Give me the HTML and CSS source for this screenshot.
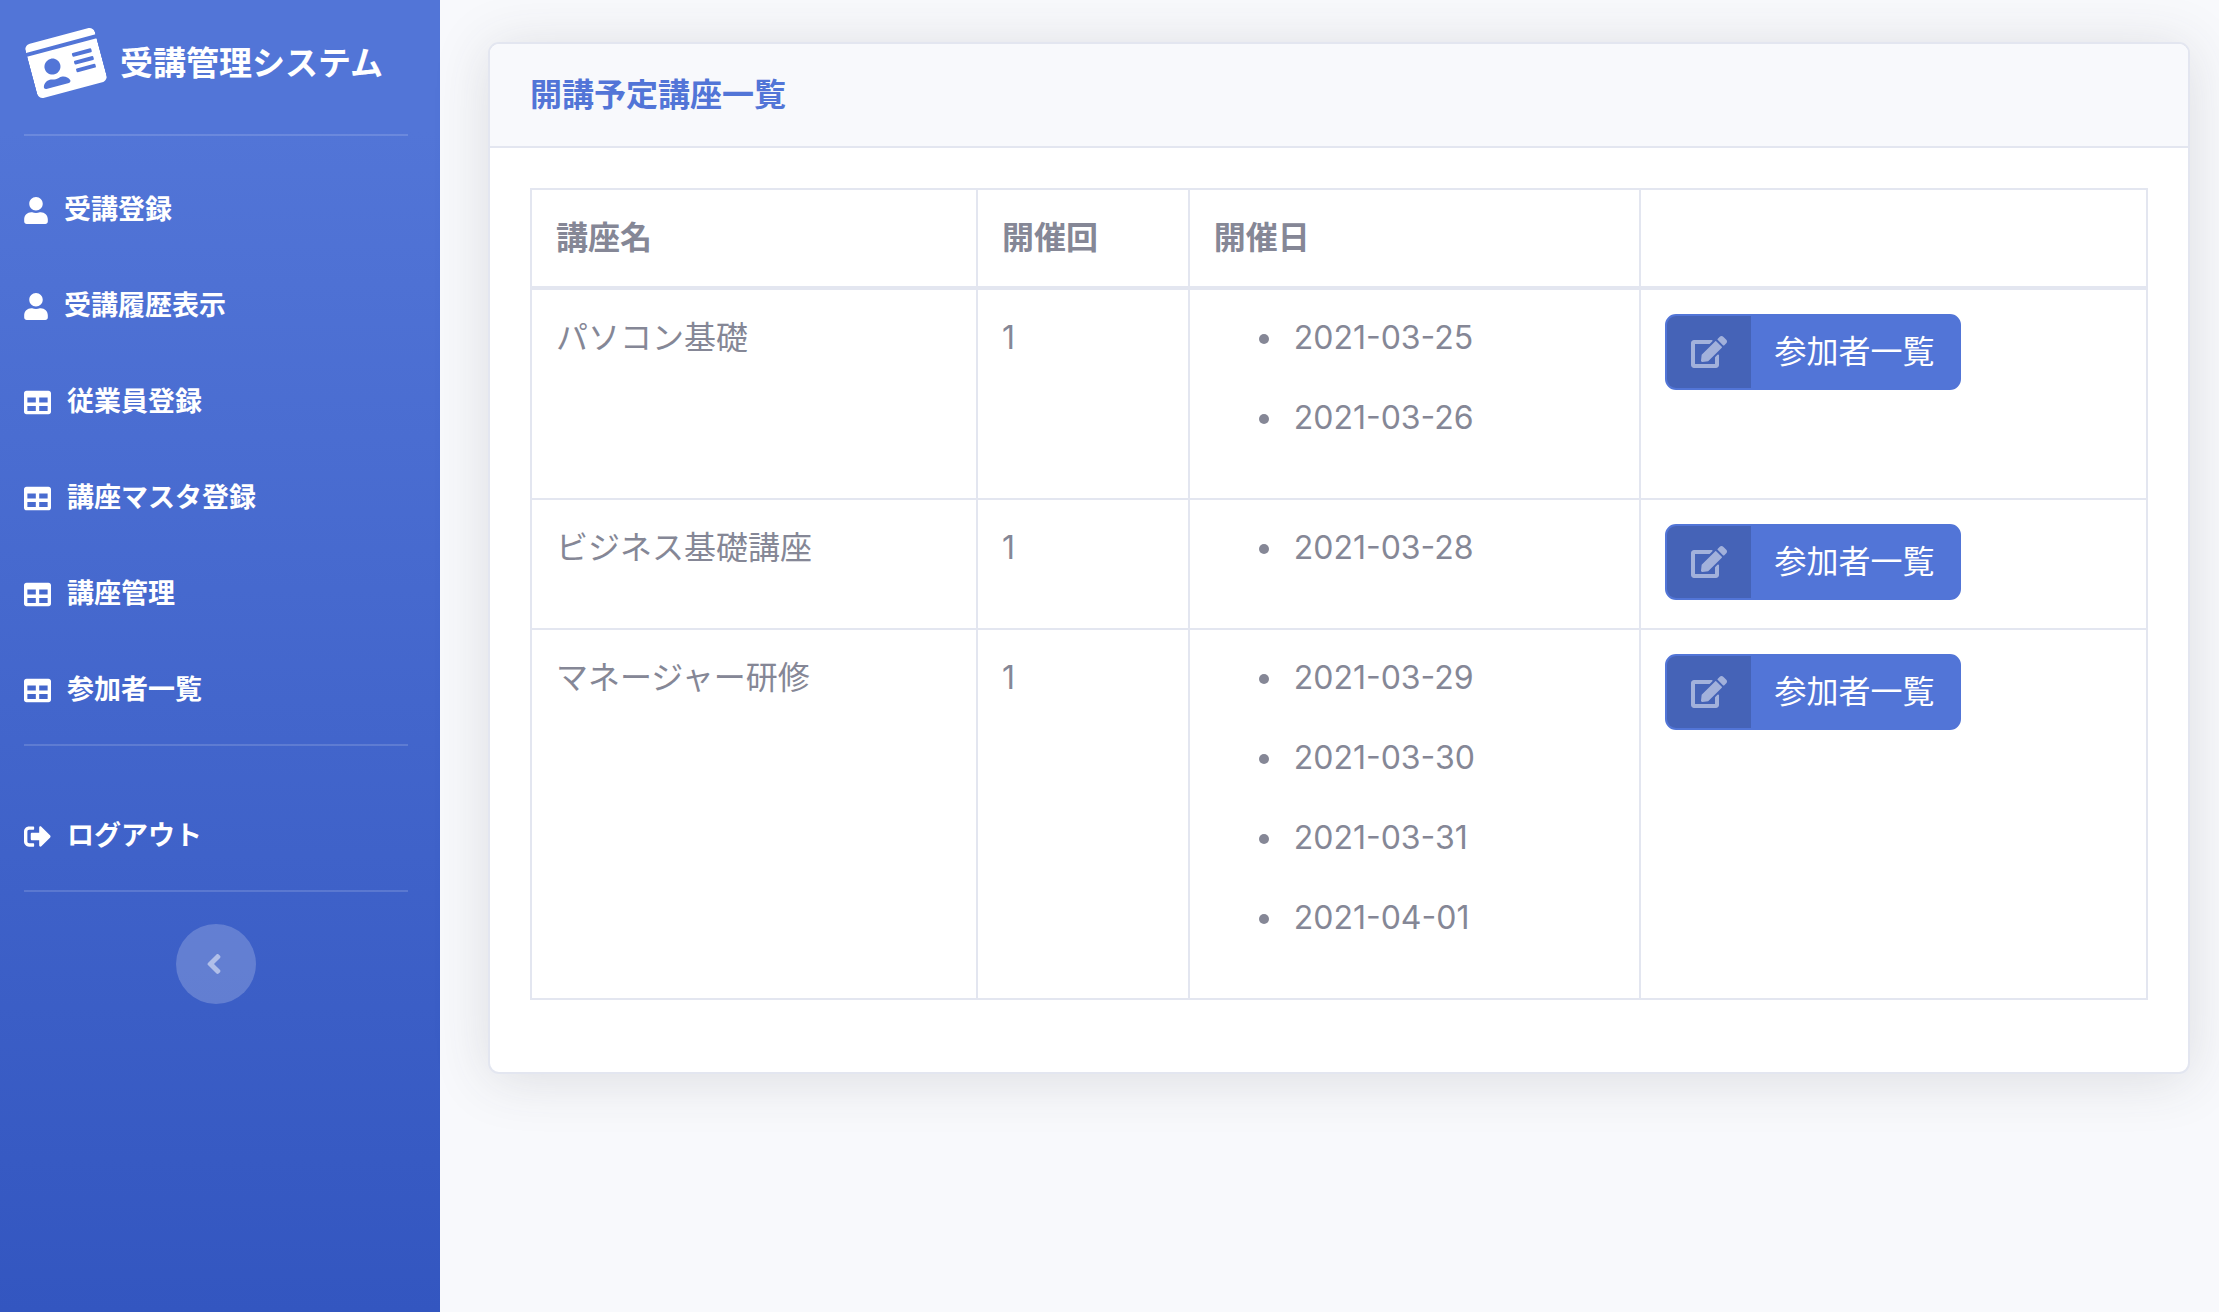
FILE: index.html
```html
<!DOCTYPE html>
<html lang="ja">
  <head>
    <meta charset="UTF-8" />
    <meta name="viewport" content="width=device-width, initial-scale=1.0" />
    <title>受講管理システム</title>
    <link rel="stylesheet" href="styles.css" />
  </head>
  <body>
    <!-- アイコン -->
    <svg class="icon-defs" aria-hidden="true">
      <symbol id="icon-id-card" viewBox="0 0 576 512">
        <path d="M528 32H48C21.5 32 0 53.5 0 80v16h576V80c0-26.5-21.5-48-48-48zM0 432c0 26.5 21.5 48 48 48h480c26.5 0 48-21.5 48-48V128H0v304zm352-232c0-4.4 3.6-8 8-8h144c4.4 0 8 3.6 8 8v16c0 4.4-3.6 8-8 8H360c-4.4 0-8-3.6-8-8v-16zm0 64c0-4.4 3.6-8 8-8h144c4.4 0 8 3.6 8 8v16c0 4.4-3.6 8-8 8H360c-4.4 0-8-3.6-8-8v-16zm0 64c0-4.4 3.6-8 8-8h144c4.4 0 8 3.6 8 8v16c0 4.4-3.6 8-8 8H360c-4.4 0-8-3.6-8-8v-16zM176 192c35.3 0 64 28.7 64 64s-28.7 64-64 64-64-28.7-64-64 28.7-64 64-64zM67.1 396.2C75.5 370.5 99.6 352 128 352h8.2c12.3 5.1 25.7 8 39.8 8s27.6-2.9 39.8-8h8.2c28.4 0 52.5 18.5 60.9 44.2 3.2 9.9-5.2 19.8-15.6 19.8H82.7c-10.4 0-18.8-10-15.6-19.8z" />
      </symbol>
      <symbol id="icon-user" viewBox="0 0 448 512">
        <path d="M224 256c70.7 0 128-57.3 128-128S294.7 0 224 0 96 57.3 96 128s57.3 128 128 128zm89.6 32h-16.7c-22.2 10.2-46.9 16-72.9 16s-50.6-5.8-72.9-16h-16.7C60.2 288 0 348.2 0 422.4V464c0 26.5 21.5 48 48 48h352c26.5 0 48-21.5 48-48v-41.6c0-74.2-60.2-134.4-134.4-134.4z" />
      </symbol>
      <symbol id="icon-table" viewBox="0 0 512 512">
        <path d="M464 32H48C21.49 32 0 53.49 0 80v352c0 26.51 21.49 48 48 48h416c26.51 0 48-21.49 48-48V80c0-26.51-21.49-48-48-48zM224 416H64v-96h160v96zm0-160H64v-96h160v96zm224 160H288v-96h160v96zm0-160H288v-96h160v96z" />
      </symbol>
      <symbol id="icon-sign-out" viewBox="0 0 512 512">
        <path d="M497 273L329 441c-15 15-41 4.5-41-17v-96H152c-13.3 0-24-10.7-24-24v-96c0-13.3 10.7-24 24-24h136V88c0-21.4 25.9-32 41-17l168 168c9.3 9.4 9.3 24.6 0 34zM192 436v-40c0-6.6-5.4-12-12-12H96c-17.7 0-32-14.3-32-32V160c0-17.7 14.3-32 32-32h84c6.6 0 12-5.4 12-12V76c0-6.6-5.4-12-12-12H96c-53 0-96 43-96 96v192c0 53 43 96 96 96h84c6.6 0 12-5.4 12-12z" />
      </symbol>
      <symbol id="icon-angle-left" viewBox="0 0 256 512">
        <path d="M31.7 239l136-136c9.4-9.4 24.6-9.4 33.9 0l22.6 22.6c9.4 9.4 9.4 24.6 0 33.9L127.9 256l96.4 96.4c9.4 9.4 9.4 24.6 0 33.9L201.7 409c-9.4 9.4-24.6 9.4-33.9 0l-136-136c-9.5-9.4-9.5-24.6-.1-34z" />
      </symbol>
      <symbol id="icon-edit" viewBox="0 0 576 512">
        <path d="M402.6 83.2l90.2 90.2c3.8 3.8 3.8 10 0 13.8L274.4 405.6l-92.8 10.3c-12.4 1.4-22.9-9.1-21.5-21.5l10.3-92.8L388.8 83.2c3.8-3.8 10-3.8 13.8 0zm162-22.9l-48.8-48.8c-15.2-15.2-39.9-15.2-55.2 0l-35.4 35.4c-3.8 3.8-3.8 10 0 13.8l90.2 90.2c3.8 3.8 10 3.8 13.8 0l35.4-35.4c15.2-15.3 15.2-40 0-55.2zM384 346.2V448H64V128h229.8c3.2 0 6.2-1.3 8.5-3.5l40-40c7.6-7.6 2.2-20.5-8.5-20.5H48C21.5 64 0 85.5 0 112v352c0 26.5 21.5 48 48 48h352c26.5 0 48-21.5 48-48V306.2c0-10.7-12.9-16-20.5-8.5l-40 40c-2.2 2.3-3.5 5.3-3.5 8.5z" />
      </symbol>
    </svg>

    <div class="wrapper">
      <!-- サイドバー -->
      <nav class="sidebar">
        <a class="sidebar-brand" href="#">
          <svg class="brand-icon"><use href="#icon-id-card" /></svg>
          <span>受講管理システム</span>
        </a>
        <hr class="sidebar-divider" />
        <ul class="nav-list">
          <li>
            <a class="nav-link" href="#">
              <svg class="icon icon-narrow"><use href="#icon-user" /></svg>
              <span>受講登録</span>
            </a>
          </li>
          <li>
            <a class="nav-link" href="#">
              <svg class="icon icon-narrow"><use href="#icon-user" /></svg>
              <span>受講履歴表示</span>
            </a>
          </li>
          <li>
            <a class="nav-link" href="#">
              <svg class="icon"><use href="#icon-table" /></svg>
              <span>従業員登録</span>
            </a>
          </li>
          <li>
            <a class="nav-link" href="#">
              <svg class="icon"><use href="#icon-table" /></svg>
              <span>講座マスタ登録</span>
            </a>
          </li>
          <li>
            <a class="nav-link" href="#">
              <svg class="icon"><use href="#icon-table" /></svg>
              <span>講座管理</span>
            </a>
          </li>
          <li>
            <a class="nav-link" href="#">
              <svg class="icon"><use href="#icon-table" /></svg>
              <span>参加者一覧</span>
            </a>
          </li>
        </ul>
        <hr class="sidebar-divider" />
        <ul class="nav-list nav-logout">
          <li>
            <a class="nav-link" href="#">
              <svg class="icon"><use href="#icon-sign-out" /></svg>
              <span>ログアウト</span>
            </a>
          </li>
        </ul>
        <hr class="sidebar-divider" />
        <button class="sidebar-toggle" type="button" aria-label="メニューを閉じる">
          <svg class="toggle-icon"><use href="#icon-angle-left" /></svg>
        </button>
      </nav>

      <!-- 講座一覧 -->
      <main class="content">
        <div class="card">
          <div class="card-header">
            <h6 class="card-title">開講予定講座一覧</h6>
          </div>
          <div class="card-body">
            <table class="table">
              <colgroup>
                <col class="col-name" />
                <col class="col-count" />
                <col class="col-date" />
                <col />
              </colgroup>
              <thead>
                <tr>
                  <th>講座名</th>
                  <th>開催回</th>
                  <th>開催日</th>
                  <th></th>
                </tr>
              </thead>
              <tbody>
                <tr>
                  <td>パソコン基礎</td>
                  <td>1</td>
                  <td>
                    <ul class="date-list">
                      <li>2021-03-25</li>
                      <li>2021-03-26</li>
                    </ul>
                  </td>
                  <td>
                    <a class="btn" href="#">
                      <span class="btn-icon"><svg><use href="#icon-edit" /></svg></span>
                      <span class="btn-text">参加者一覧</span>
                    </a>
                  </td>
                </tr>
                <tr>
                  <td>ビジネス基礎講座</td>
                  <td>1</td>
                  <td>
                    <ul class="date-list">
                      <li>2021-03-28</li>
                    </ul>
                  </td>
                  <td>
                    <a class="btn" href="#">
                      <span class="btn-icon"><svg><use href="#icon-edit" /></svg></span>
                      <span class="btn-text">参加者一覧</span>
                    </a>
                  </td>
                </tr>
                <tr>
                  <td>マネージャー研修</td>
                  <td>1</td>
                  <td>
                    <ul class="date-list">
                      <li>2021-03-29</li>
                      <li>2021-03-30</li>
                      <li>2021-03-31</li>
                      <li>2021-04-01</li>
                    </ul>
                  </td>
                  <td>
                    <a class="btn" href="#">
                      <span class="btn-icon"><svg><use href="#icon-edit" /></svg></span>
                      <span class="btn-text">参加者一覧</span>
                    </a>
                  </td>
                </tr>
              </tbody>
            </table>
          </div>
        </div>
      </main>
    </div>
  </body>
</html>
```
FILE: styles.css
```css
* {
  box-sizing: border-box;
}
body {
  margin: 0;
  font-family: Inter, "Noto Sans CJK JP", sans-serif;
  font-size: 32px;
  line-height: 48px;
  color: #858796;
  background-color: #f8f9fc;
}
a {
  text-decoration: none;
}
svg {
  display: block;
  flex-shrink: 0;
  fill: currentColor;
}
.icon-defs {
  display: none;
}
.wrapper {
  display: flex;
  min-height: 100vh;
}

/* サイドバー */
.sidebar {
  width: 440px;
  flex-shrink: 0;
  padding: 0 32px 0 24px;
  color: #ffffff;
  background-image: linear-gradient(180deg, #5275d7 10%, #3356c0 100%);
}
.sidebar-brand {
  display: flex;
  align-items: center;
  gap: 18px;
  padding: 31px 0 33px 6px;
  color: #ffffff;
  font-size: 33px;
  font-weight: 700;
  white-space: nowrap;
}
.brand-icon {
  width: 72px;
  height: 64px;
  transform: rotate(-15deg);
}
.sidebar-divider {
  margin: 6px 0 0;
  border: 0;
  border-top: 2px solid rgba(255, 255, 255, 0.15);
}
.nav-list {
  list-style: none;
  margin: 26px 0 0;
  padding: 0;
}
.nav-logout {
  margin-top: 42px;
}
.nav-link {
  display: flex;
  align-items: center;
  gap: 16px;
  height: 96px;
  color: #ffffff;
  font-size: 27px;
  font-weight: 700;
}
.icon {
  width: 27px;
  height: 27px;
}
.icon-narrow {
  width: 24px;
}
.sidebar-toggle {
  display: flex;
  align-items: center;
  justify-content: center;
  width: 80px;
  height: 80px;
  margin: 32px auto 0;
  padding: 0 4px 0 0;
  border: none;
  border-radius: 50%;
  color: rgba(255, 255, 255, 0.5);
  background-color: rgba(255, 255, 255, 0.2);
  cursor: pointer;
}
.toggle-icon {
  width: 16px;
  height: 32px;
}

/* カード */
.content {
  flex: 1;
  min-width: 0;
  padding: 42px 29px 42px 48px;
}
.card {
  border: 2px solid #e3e6f0;
  border-radius: 11px;
  background-color: #ffffff;
  box-shadow: 0 5px 56px rgba(58, 59, 69, 0.15);
}
.card-header {
  padding: 32px 40px;
  border-bottom: 2px solid #e3e6f0;
  border-radius: 9px 9px 0 0;
  background-color: #f8f9fc;
}
.card-title {
  margin: 0;
  font-size: 32px;
  line-height: 38px;
  color: #5275d7;
}
.card-body {
  padding: 40px;
}

/* テーブル */
.table {
  width: 100%;
  margin-bottom: 32px;
  border-collapse: collapse;
  table-layout: fixed;
}
.table th,
.table td {
  padding: 24px;
  border: 2px solid #e3e6f0;
  text-align: left;
  vertical-align: top;
}
.table thead th {
  border-bottom-width: 4px;
}
.col-name {
  width: 27.6%;
}
.col-count {
  width: 13.1%;
}
.col-date {
  width: 27.9%;
}
.date-list {
  margin: 0;
  padding-left: 72px;
}
.date-list li {
  margin-bottom: 32px;
  padding-left: 8px;
}

/* ボタン */
.btn {
  display: inline-flex;
  vertical-align: top;
  overflow: hidden;
  border: 2px solid #5275d7;
  border-radius: 11px;
  color: #ffffff;
  background-color: #5275d7;
}
.btn-icon {
  display: flex;
  align-items: center;
  padding: 12px 24px;
  color: rgba(255, 255, 255, 0.5);
  background-color: rgba(0, 0, 0, 0.15);
}
.btn-icon svg {
  width: 36px;
  height: 32px;
}
.btn-text {
  padding: 12px 24px;
}
```
